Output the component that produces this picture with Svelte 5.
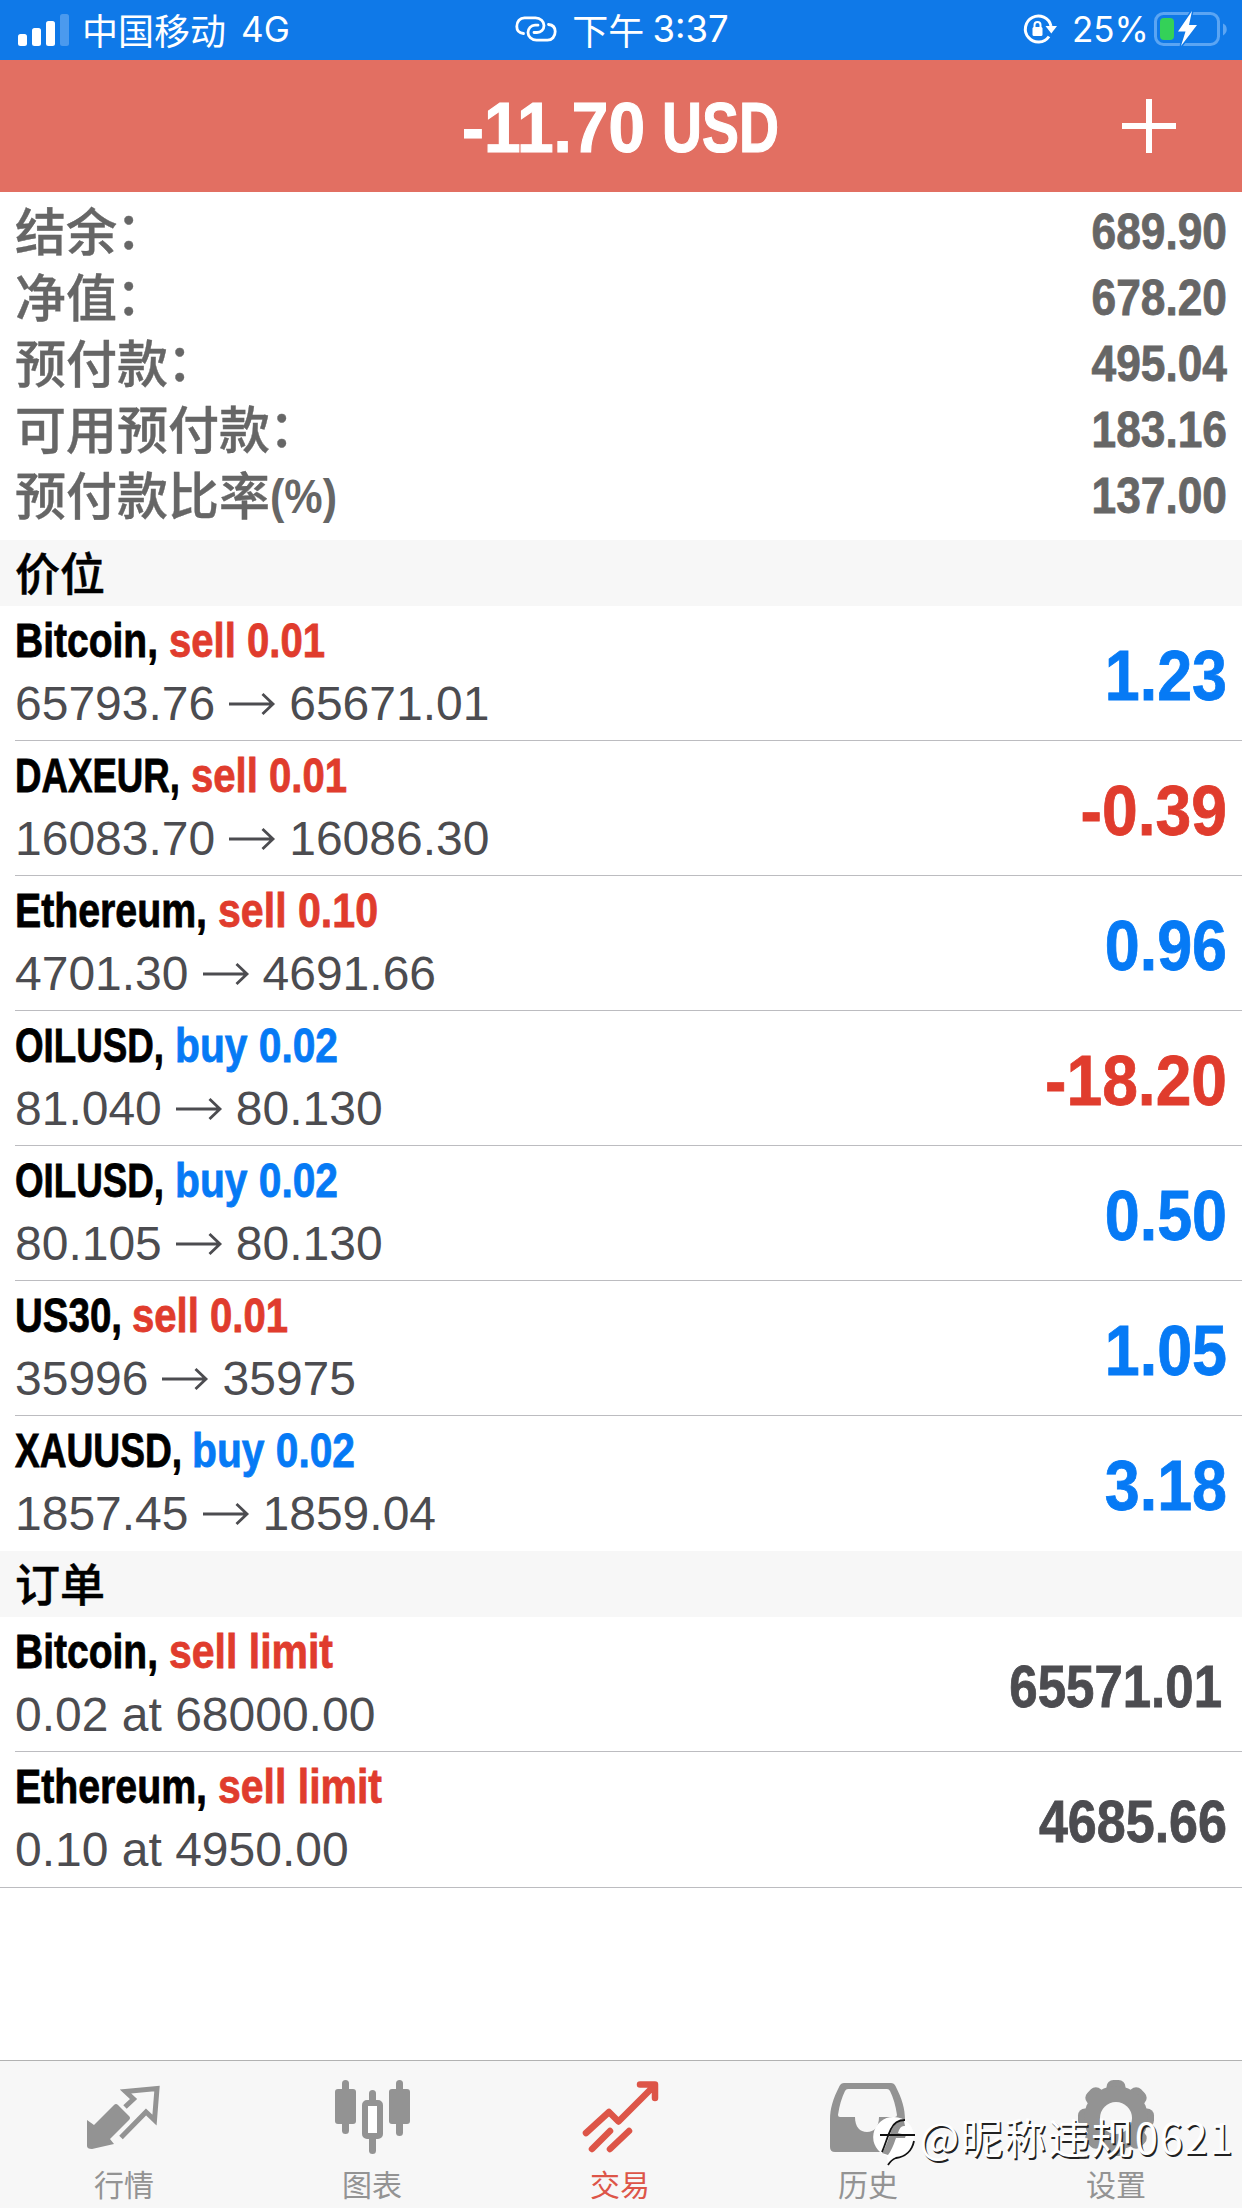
<script>
  const INK = { buy: '#067af5', sell: '#e03c2d' };

  const summary = [
    { label: '结余', suffix: '：', value: '689.90' },
    { label: '净值', suffix: '：', value: '678.20' },
    { label: '预付款', suffix: '：', value: '495.04' },
    { label: '可用预付款', suffix: '：', value: '183.16' },
    { label: '预付款比率', suffix: '(%)', value: '137.00' },
  ];

  // x / w: start and advance of the action label after the symbol name
  const positions = [
    { name: 'Bitcoin,', nameW: 143, side: 'sell', action: 'sell 0.01', x: 169, w: 156, from: '65793.76', to: '65671.01', profit: '1.23' },
    { name: 'DAXEUR,', nameW: 165, side: 'sell', action: 'sell 0.01', x: 191, w: 156, from: '16083.70', to: '16086.30', profit: '-0.39' },
    { name: 'Ethereum,', nameW: 192, side: 'sell', action: 'sell 0.10', x: 218, w: 160, from: '4701.30', to: '4691.66', profit: '0.96' },
    { name: 'OILUSD,', nameW: 149, side: 'buy', action: 'buy 0.02', x: 175, w: 163, from: '81.040', to: '80.130', profit: '-18.20' },
    { name: 'OILUSD,', nameW: 149, side: 'buy', action: 'buy 0.02', x: 175, w: 163, from: '80.105', to: '80.130', profit: '0.50' },
    { name: 'US30,', nameW: 107, side: 'sell', action: 'sell 0.01', x: 132, w: 156, from: '35996', to: '35975', profit: '1.05' },
    { name: 'XAUUSD,', nameW: 167, side: 'buy', action: 'buy 0.02', x: 192, w: 163, from: '1857.45', to: '1859.04', profit: '3.18' },
  ];

  const orders = [
    { name: 'Bitcoin,', nameW: 143, action: 'sell limit', x: 169, w: 164, detail: '0.02 at 68000.00', price: '65571.01' },
    { name: 'Ethereum,', nameW: 192, action: 'sell limit', x: 218, w: 164, detail: '0.10 at 4950.00', price: '4685.66' },
  ];

  const tabs = [
    { id: 'quotes', label: '行情' },
    { id: 'chart', label: '图表' },
    { id: 'trade', label: '交易' },
    { id: 'history', label: '历史' },
    { id: 'settings', label: '设置' },
  ];
  const active = 'trade';

  // condensed figures: half an em per digit, a quarter for the point
  function figureWidth(text, size) {
    let em = 0;
    for (const ch of text) em += ch === '.' ? 0.25 : ch === '-' ? 0.34 : 0.5;
    if (text.endsWith('1')) em -= 0.08;
    return em * size - 2;
  }
</script>

{#snippet figure(text, size, height, baseline, fill)}
  <svg class="figure" width="300" {height}>
    <text x={text.endsWith('1') ? 295 : 300} y={baseline} text-anchor="end" font-size={size} {fill} stroke={fill} textLength={figureWidth(text, size)} lengthAdjust="spacingAndGlyphs">{text}</text>
  </svg>
{/snippet}

{#snippet heading(row, color)}
  <svg class="heading" width="600" height="66">
    <text x="15" y="51" fill="#000" stroke="#000" textLength={row.nameW} lengthAdjust="spacingAndGlyphs">{row.name}</text>
    <text x={row.x} y="51" fill={color} stroke={color} textLength={row.w} lengthAdjust="spacingAndGlyphs">{row.action}</text>
  </svg>
{/snippet}

<div class="screen">
  <div class="status">
    <div class="carrier">
      <svg width="52" height="38" viewBox="0 0 52 38" fill="#fff">
        <rect x="0" y="24" width="9" height="12" rx="2.500" />
        <rect x="14" y="18" width="9" height="18" rx="2.500" />
        <rect x="28" y="11" width="9" height="25" rx="2.500" />
        <rect x="42" y="4" width="9" height="32" rx="2.500" opacity="0.25" />
      </svg>
      <span class="cjk">中国移动</span>
      <span class="network">4G</span>
    </div>
    <div class="clock">
      <svg width="42" height="26" viewBox="0 0 42 26" fill="none" stroke="#fff" stroke-width="2.800" stroke-linecap="round">
        <path d="M8.500 17.500C4 17 1.800 14 1.800 10.500C1.800 5.500 5 1.800 9.500 1.800H20.500C25.500 1.800 29 5.500 29 9.500C29 13.500 26 16.500 22 16.500H19" />
        <path d="M33.500 8.500C38 9 40.200 12 40.200 15.500C40.200 20.500 37 24.200 32.500 24.200H21.500C16.500 24.200 13 20.500 13 16.500C13 12.500 16 9.200 20 9.200H23" />
      </svg>
      <span class="cjk">下午</span>
      <span class="time">3:37</span>
    </div>
    <div class="power">
      <svg width="34" height="30" viewBox="0 0 34 30" fill="none" stroke="#fff" stroke-width="3">
        <path d="M26 22.500A13 13 0 1 1 28 12" />
        <path d="M22.500 12H34L28.300 19.500Z" fill="#fff" stroke="none" />
        <rect x="9.500" y="13" width="10" height="9" rx="1.500" fill="#fff" stroke="none" />
        <path d="M11.500 14V11A3 3 0 0 1 17.500 11V14" stroke-width="2" />
      </svg>
      <span class="percent">25%</span>
      <svg class="battery" width="74" height="42" viewBox="0 0 74 42">
        <rect x="1.500" y="5.500" width="63" height="31" rx="8" fill="none" stroke="#5ba5f3" stroke-width="3" />
        <path d="M69 15.500C74 17.500 74 25 69 27.500Z" fill="#5ba5f3" />
        <rect x="6" y="10" width="14" height="22" rx="4" fill="#34d158" />
        <path d="M38 3L24 23.500H31.500L27 38L43 17H35Z" fill="#fff" stroke="#0f79e8" stroke-width="3" paint-order="stroke" />
      </svg>
    </div>
  </div>

  <header>
    <svg class="total" width="340" height="132">
      <text x="11" y="92" textLength="183" lengthAdjust="spacingAndGlyphs">-11.70</text>
      <text x="211" y="92" textLength="117" lengthAdjust="spacingAndGlyphs">USD</text>
    </svg>
    <svg class="add" width="54" height="54" viewBox="0 0 54 54" stroke="#fff" stroke-width="6">
      <path d="M27 0V54M0 27H54" />
    </svg>
  </header>

  <section class="summary">
    {#each summary as item}
      <div class="line">
        <div class="label">
          <span>{item.label}</span>
          {#if item.suffix === '：'}
            <span class="colon">：</span>
          {:else}
            <svg class="suffix" width="70" height="66"><text x="0" y="49" textLength="67" lengthAdjust="spacingAndGlyphs">{item.suffix}</text></svg>
          {/if}
        </div>
        {@render figure(item.value, 50, 66, 49, '#666')}
      </div>
    {/each}
  </section>

  <h2>价位</h2>
  <ul>
    {#each positions as row}
      <li>
        <div class="info">
          {@render heading(row, INK[row.side])}
          <div class="detail">
            <span>{row.from}</span>
            <svg class="arrow" width="48" height="24" viewBox="0 0 48 24" fill="none" stroke="#4c4c50" stroke-width="2.800"><path d="M1 12H45M34.500 2L45 12L34.500 22" /></svg>
            <span>{row.to}</span>
          </div>
        </div>
        {@render figure(row.profit, 71, 135, 94, row.profit.startsWith('-') ? INK.sell : INK.buy)}
      </li>
    {/each}
  </ul>

  <h2>订单</h2>
  <ul class="orders">
    {#each orders as row}
      <li>
        <div class="info">
          {@render heading(row, INK.sell)}
          <div class="detail"><span>{row.detail}</span></div>
        </div>
        {@render figure(row.price, 58.5, 135, 90, '#4c4c50')}
      </li>
    {/each}
  </ul>

  <nav>
    {#each tabs as tab}
      <div class="tab" class:active={tab.id === active}>
        <svg width="76" height="76" viewBox="0 0 76 76" fill="currentColor">
          {#if tab.id === 'quotes'}
            <path d="M1 40L8 45L28 25Q30 23 32 25L43 36Q45 38 43 40L24 59L28 64L6 69Q1 69 1 66Z" />
            <path d="M39 27L47.500 19L39.500 11.500L71 8.500L68.500 40L60 32L35 57.500" fill="none" stroke="currentColor" stroke-width="5" />
          {:else if tab.id === 'chart'}
            <rect x="8" y="0" width="7" height="54" rx="3.500" />
            <rect x="1" y="9" width="21" height="35" rx="3" />
            <rect x="35" y="10" width="7" height="14" rx="3.500" />
            <rect x="35" y="54" width="7" height="20" rx="3.500" />
            <rect x="31" y="23" width="15" height="33" rx="2" fill="#fff" stroke="currentColor" stroke-width="6" />
            <rect x="62" y="0" width="7" height="56" rx="3.500" />
            <rect x="55" y="9" width="21" height="35" rx="3" />
          {:else if tab.id === 'trade'}
            <path d="M4 53L27 32L36.500 41.500L71 7M58 4.500H73V18M10 69L28 51M28 69L47 51" fill="none" stroke="currentColor" stroke-width="6.500" stroke-linecap="round" stroke-linejoin="round" />
          {:else if tab.id === 'history'}
            <path fill-rule="evenodd" d="M14 3H61Q64 3 65.500 6C72 19 75 28 75 40V67Q75 72 70 72H5Q0 72 0 67V40C0 28 3 19 9.500 6Q11 3 14 3ZM18 9Q16 9 15 11Q10 21 8 35Q8 37 10 37H25C25 47 30 52 37 52S49 47 49 37H65Q67 37 67 35Q65 21 60 11Q59 9 57 9Z" />
          {:else}
            <g>
              {#each [0, 45, 90, 135] as deg}
                <rect x="28.500" y="0" width="19" height="76" rx="7" transform="rotate({deg} 38 38)" />
              {/each}
              <circle cx="38" cy="38" r="32" />
              <circle cx="38" cy="38" r="16" fill="#f7f7f7" />
            </g>
          {/if}
        </svg>
        <span>{tab.label}</span>
      </div>
    {/each}
  </nav>

  <div class="watermark">
    <svg width="42" height="50" viewBox="0 0 42 50">
      <path d="M20 0A20 20 0 0 1 40 20C40 32 31 40 22 41Q17 43 14 48L13 39A20 20 0 0 1 20 0Z" fill="#fff" />
      <path d="M8 36C12 30 14 22 18 12Q22 2 30 4L31 9Q26 8 24 16L32 18L31 21H22Q18 33 14 38Z" fill="#939393" />
      <path d="M8 35C12 26 13 20 17 12Q21 3 31 3M6 18H41M40 24C38 34 31 40 22 41Q17 43 14 48" fill="none" stroke="#111" stroke-width="1.800" />
    </svg>
    <span>@昵称违规0621</span>
  </div>
</div>

<style>
  :global(body) {
    margin: 0;
    background: #fff;
  }
  .screen {
    position: relative;
    display: flex;
    flex-direction: column;
    width: 1242px;
    height: 2208px;
    overflow: hidden;
    background: #fff;
    color: #000;
    font-family: "Liberation Sans", "Noto Sans CJK SC", sans-serif;
  }
  svg {
    display: block;
    flex: none;
    overflow: visible;
  }
  .status {
    display: flex;
    justify-content: space-between;
    height: 60px;
    background: #0f79e8;
    color: #fff;
    font-family: Inter, "Noto Sans CJK SC", sans-serif;
    font-size: 35px;
    line-height: 58px;
  }
  .carrier,
  .clock,
  .power {
    display: flex;
    align-items: center;
    height: 58px;
  }
  .carrier {
    width: 344px;
    padding-left: 18px;
  }
  .cjk {
    font-family: "Noto Sans CJK SC", sans-serif;
    font-size: 36px;
  }
  .carrier .cjk {
    margin-left: 12px;
  }
  .network {
    margin-left: 15px;
  }
  .clock .cjk {
    margin-left: 15px;
  }
  .time {
    margin-left: 8px;
    font-size: 36.5px;
  }
  .power {
    justify-content: flex-end;
    width: 346px;
    padding-right: 14px;
  }
  .percent {
    margin: 0 5px 0 15px;
  }
  header {
    display: grid;
    grid-template-columns: 1fr 340px 1fr;
    align-items: center;
    height: 132px;
    background: #e26f62;
  }
  .total {
    grid-column: 2;
    fill: #fff;
    stroke: #fff;
    stroke-width: 1.2px;
    font-size: 71px;
    font-weight: 700;
  }
  .add {
    justify-self: end;
    margin-right: 66px;
  }
  .summary {
    height: 348px;
    padding: 8px 15px 0;
    box-sizing: border-box;
    color: #666;
  }
  .line {
    display: flex;
    justify-content: space-between;
    height: 66px;
  }
  .label {
    display: flex;
    align-items: flex-start;
    font: 500 51px/58px "Noto Sans CJK SC", sans-serif;
    -webkit-text-stroke: 0.4px #666;
  }
  .colon {
    margin: -2px 0 0 -1px;
  }
  .suffix {
    fill: #666;
    font: 700 48px "Liberation Sans", sans-serif;
  }
  .figure,
  .heading {
    font-weight: 700;
    stroke-width: 0.8px;
  }
  .heading {
    margin-left: -15px;
    font-size: 48px;
  }
  h2 {
    height: 66px;
    margin: 0;
    padding-left: 15px;
    background: #f7f7f7;
    font: 500 45px/63px "Noto Sans CJK SC", sans-serif;
    -webkit-text-stroke: 0.5px #000;
  }
  ul {
    margin: 0;
    padding: 0;
    list-style: none;
  }
  li {
    display: flex;
    justify-content: space-between;
    height: 135px;
    box-sizing: border-box;
    margin-left: 15px;
    padding-right: 15px;
    border-bottom: 1px solid #bcbcc0;
  }
  li:last-child {
    border-bottom: 0;
  }
  .orders {
    border-bottom: 1px solid #bcbcc0;
  }
  .detail {
    display: flex;
    align-items: center;
    gap: 13px;
    height: 64px;
    color: #4c4c50;
    font-size: 48px;
    line-height: 64px;
  }
  nav {
    display: grid;
    grid-template-columns: repeat(5, 1fr);
    height: 148px;
    box-sizing: border-box;
    margin-top: auto;
    padding-right: 2px;
    border-top: 1px solid #b2b2b2;
    background: #f7f7f7;
  }
  .tab {
    display: flex;
    flex-direction: column;
    align-items: center;
    padding-top: 19px;
    color: #939393;
    font: 400 30px/44px "Noto Sans CJK SC", sans-serif;
  }
  .tab span {
    margin-top: 5px;
  }
  .active {
    color: #dd5548;
  }
  .watermark {
    position: absolute;
    right: 8px;
    bottom: 41px;
    display: flex;
    align-items: center;
    gap: 4px;
    color: #fff;
    font: 400 42px/56px "Noto Sans CJK SC", sans-serif;
    letter-spacing: 1.5px;
    text-shadow: 1.5px 1.5px 0.5px #222;
  }
  .watermark span {
    margin-top: -12px;
  }
</style>
